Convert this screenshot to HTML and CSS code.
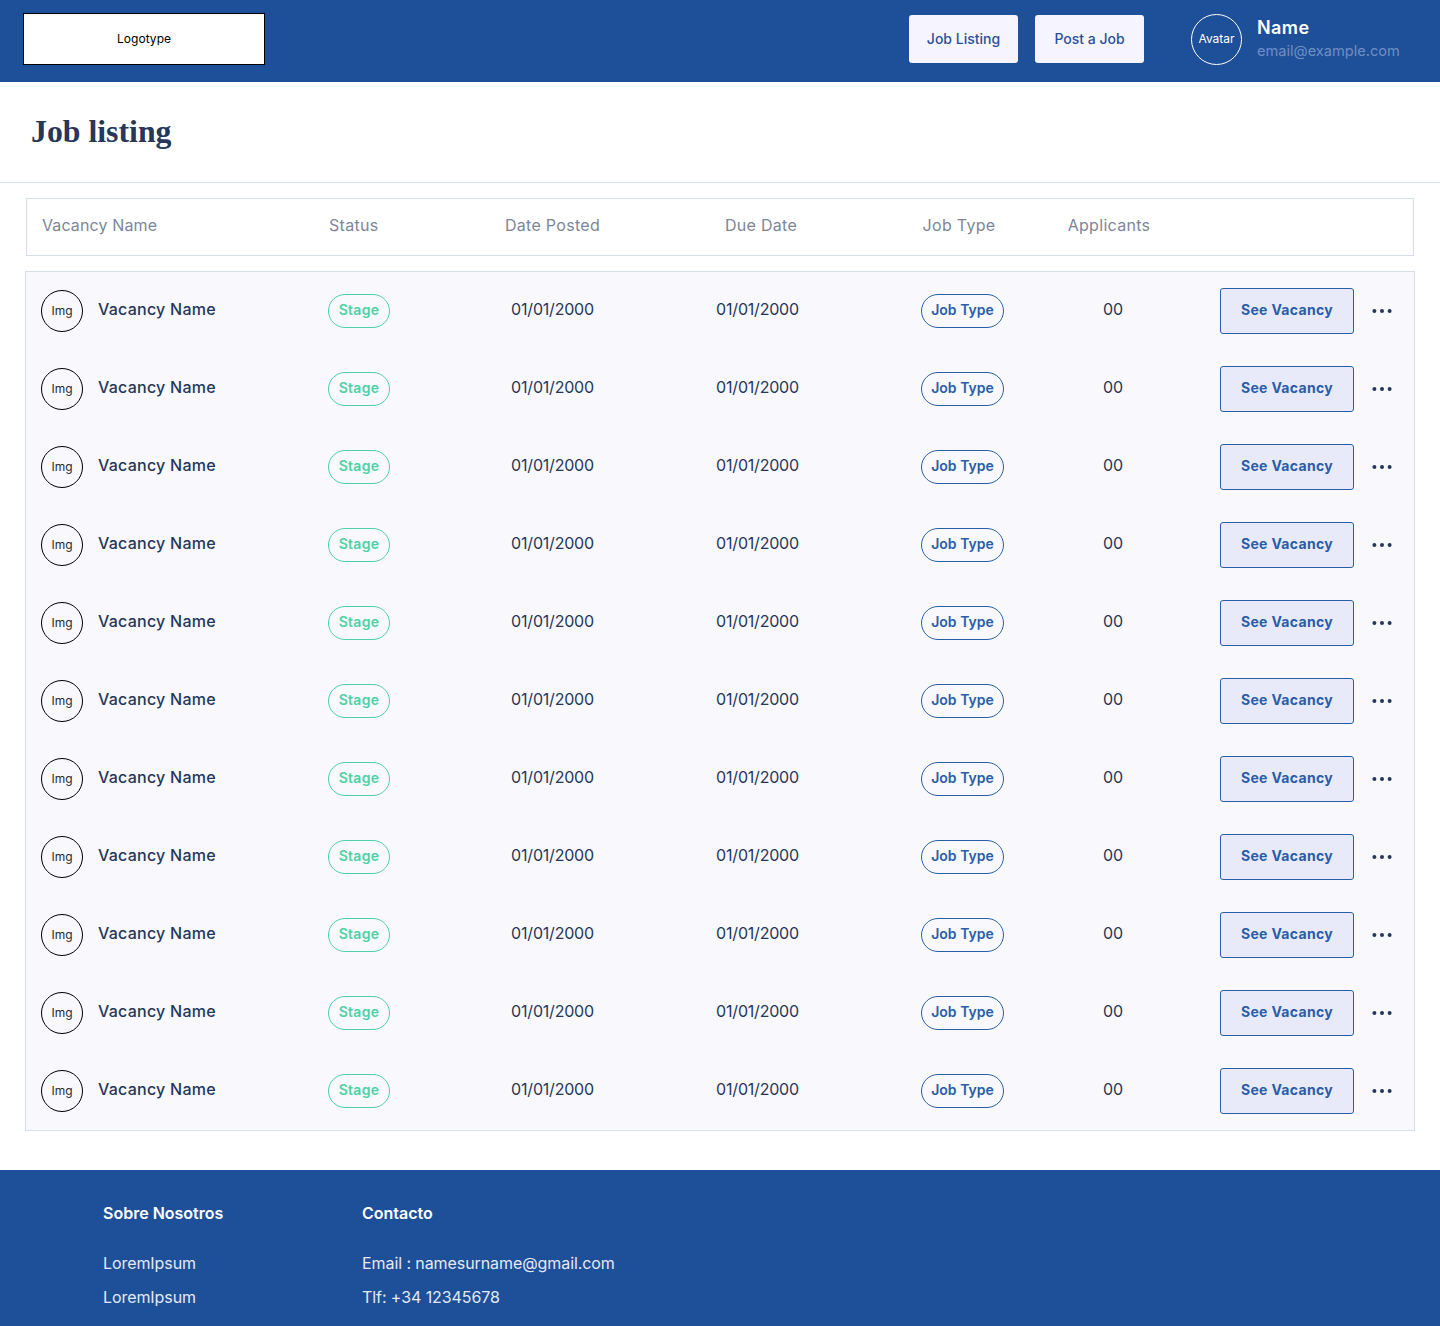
FILE: index.html
```html
<!DOCTYPE html>
<html lang="en">
<head>
    <meta charset="UTF-8">
    <meta name="viewport" content="width=device-width, initial-scale=1.0">
    <title>Job listing</title>
    <link rel="stylesheet" href="styles.css">
</head>
<body>

    <header class="topbar">
        <div class="logo">Logotype</div>
        <nav class="topnav">
            <a class="navbtn">Job Listing</a>
            <a class="navbtn">Post a Job</a>
        </nav>
        <div class="user">
            <div class="avatar">Avatar</div>
            <div class="userinfo">
                <div class="username">Name</div>
                <div class="useremail">email@example.com</div>
            </div>
        </div>
    </header>

    <div class="titlebar">
        <h1>Job listing</h1>
    </div>

    <main class="content">
        <div class="tablehead">
            <div class="headname">Vacancy Name</div>
            <div>Status</div>
            <div class="center">Date Posted</div>
            <div class="center">Due Date</div>
            <div class="center">Job Type</div>
            <div class="center">Applicants</div>
        </div>

        <div class="rows">
            <div class="row">
                <div class="vacancy"><span class="thumb">Img</span><span class="vname">Vacancy Name</span></div>
                <div><span class="stage">Stage</span></div>
                <div class="cell">01/01/2000</div>
                <div class="cell">01/01/2000</div>
                <div class="cell"><span class="jobtype">Job Type</span></div>
                <div class="cell">00</div>
                <a class="seebtn">See Vacancy</a>
                <svg class="dots" width="20" height="4" viewBox="0 0 20 4"><circle cx="2.4" cy="2" r="2"/><circle cx="10" cy="2" r="2"/><circle cx="17.6" cy="2" r="2"/></svg>
            </div>
            <div class="row">
                <div class="vacancy"><span class="thumb">Img</span><span class="vname">Vacancy Name</span></div>
                <div><span class="stage">Stage</span></div>
                <div class="cell">01/01/2000</div>
                <div class="cell">01/01/2000</div>
                <div class="cell"><span class="jobtype">Job Type</span></div>
                <div class="cell">00</div>
                <a class="seebtn">See Vacancy</a>
                <svg class="dots" width="20" height="4" viewBox="0 0 20 4"><circle cx="2.4" cy="2" r="2"/><circle cx="10" cy="2" r="2"/><circle cx="17.6" cy="2" r="2"/></svg>
            </div>
            <div class="row">
                <div class="vacancy"><span class="thumb">Img</span><span class="vname">Vacancy Name</span></div>
                <div><span class="stage">Stage</span></div>
                <div class="cell">01/01/2000</div>
                <div class="cell">01/01/2000</div>
                <div class="cell"><span class="jobtype">Job Type</span></div>
                <div class="cell">00</div>
                <a class="seebtn">See Vacancy</a>
                <svg class="dots" width="20" height="4" viewBox="0 0 20 4"><circle cx="2.4" cy="2" r="2"/><circle cx="10" cy="2" r="2"/><circle cx="17.6" cy="2" r="2"/></svg>
            </div>
            <div class="row">
                <div class="vacancy"><span class="thumb">Img</span><span class="vname">Vacancy Name</span></div>
                <div><span class="stage">Stage</span></div>
                <div class="cell">01/01/2000</div>
                <div class="cell">01/01/2000</div>
                <div class="cell"><span class="jobtype">Job Type</span></div>
                <div class="cell">00</div>
                <a class="seebtn">See Vacancy</a>
                <svg class="dots" width="20" height="4" viewBox="0 0 20 4"><circle cx="2.4" cy="2" r="2"/><circle cx="10" cy="2" r="2"/><circle cx="17.6" cy="2" r="2"/></svg>
            </div>
            <div class="row">
                <div class="vacancy"><span class="thumb">Img</span><span class="vname">Vacancy Name</span></div>
                <div><span class="stage">Stage</span></div>
                <div class="cell">01/01/2000</div>
                <div class="cell">01/01/2000</div>
                <div class="cell"><span class="jobtype">Job Type</span></div>
                <div class="cell">00</div>
                <a class="seebtn">See Vacancy</a>
                <svg class="dots" width="20" height="4" viewBox="0 0 20 4"><circle cx="2.4" cy="2" r="2"/><circle cx="10" cy="2" r="2"/><circle cx="17.6" cy="2" r="2"/></svg>
            </div>
            <div class="row">
                <div class="vacancy"><span class="thumb">Img</span><span class="vname">Vacancy Name</span></div>
                <div><span class="stage">Stage</span></div>
                <div class="cell">01/01/2000</div>
                <div class="cell">01/01/2000</div>
                <div class="cell"><span class="jobtype">Job Type</span></div>
                <div class="cell">00</div>
                <a class="seebtn">See Vacancy</a>
                <svg class="dots" width="20" height="4" viewBox="0 0 20 4"><circle cx="2.4" cy="2" r="2"/><circle cx="10" cy="2" r="2"/><circle cx="17.6" cy="2" r="2"/></svg>
            </div>
            <div class="row">
                <div class="vacancy"><span class="thumb">Img</span><span class="vname">Vacancy Name</span></div>
                <div><span class="stage">Stage</span></div>
                <div class="cell">01/01/2000</div>
                <div class="cell">01/01/2000</div>
                <div class="cell"><span class="jobtype">Job Type</span></div>
                <div class="cell">00</div>
                <a class="seebtn">See Vacancy</a>
                <svg class="dots" width="20" height="4" viewBox="0 0 20 4"><circle cx="2.4" cy="2" r="2"/><circle cx="10" cy="2" r="2"/><circle cx="17.6" cy="2" r="2"/></svg>
            </div>
            <div class="row">
                <div class="vacancy"><span class="thumb">Img</span><span class="vname">Vacancy Name</span></div>
                <div><span class="stage">Stage</span></div>
                <div class="cell">01/01/2000</div>
                <div class="cell">01/01/2000</div>
                <div class="cell"><span class="jobtype">Job Type</span></div>
                <div class="cell">00</div>
                <a class="seebtn">See Vacancy</a>
                <svg class="dots" width="20" height="4" viewBox="0 0 20 4"><circle cx="2.4" cy="2" r="2"/><circle cx="10" cy="2" r="2"/><circle cx="17.6" cy="2" r="2"/></svg>
            </div>
            <div class="row">
                <div class="vacancy"><span class="thumb">Img</span><span class="vname">Vacancy Name</span></div>
                <div><span class="stage">Stage</span></div>
                <div class="cell">01/01/2000</div>
                <div class="cell">01/01/2000</div>
                <div class="cell"><span class="jobtype">Job Type</span></div>
                <div class="cell">00</div>
                <a class="seebtn">See Vacancy</a>
                <svg class="dots" width="20" height="4" viewBox="0 0 20 4"><circle cx="2.4" cy="2" r="2"/><circle cx="10" cy="2" r="2"/><circle cx="17.6" cy="2" r="2"/></svg>
            </div>
            <div class="row">
                <div class="vacancy"><span class="thumb">Img</span><span class="vname">Vacancy Name</span></div>
                <div><span class="stage">Stage</span></div>
                <div class="cell">01/01/2000</div>
                <div class="cell">01/01/2000</div>
                <div class="cell"><span class="jobtype">Job Type</span></div>
                <div class="cell">00</div>
                <a class="seebtn">See Vacancy</a>
                <svg class="dots" width="20" height="4" viewBox="0 0 20 4"><circle cx="2.4" cy="2" r="2"/><circle cx="10" cy="2" r="2"/><circle cx="17.6" cy="2" r="2"/></svg>
            </div>
            <div class="row">
                <div class="vacancy"><span class="thumb">Img</span><span class="vname">Vacancy Name</span></div>
                <div><span class="stage">Stage</span></div>
                <div class="cell">01/01/2000</div>
                <div class="cell">01/01/2000</div>
                <div class="cell"><span class="jobtype">Job Type</span></div>
                <div class="cell">00</div>
                <a class="seebtn">See Vacancy</a>
                <svg class="dots" width="20" height="4" viewBox="0 0 20 4"><circle cx="2.4" cy="2" r="2"/><circle cx="10" cy="2" r="2"/><circle cx="17.6" cy="2" r="2"/></svg>
            </div>
        </div>
    </main>

    <footer class="footer">
        <div class="footcol first">
            <h4>Sobre Nosotros</h4>
            <p>LoremIpsum</p>
            <p>LoremIpsum</p>
        </div>
        <div class="footcol">
            <h4>Contacto</h4>
            <p>Email : namesurname@gmail.com</p>
            <p>Tlf: +34 12345678</p>
        </div>
    </footer>

</body>
</html>
```

FILE: styles.css
```css
*
{
    box-sizing: border-box;
}

body
{
    margin: 0px;
    background: #ffffff;
    font-family: Inter, "Liberation Sans", sans-serif;
    color: #25375a;
}

.topbar
{
    display: flex;
    align-items: center;
    height: 82px;
    padding-left: 23px;
    padding-bottom: 4px;
    background: #1e4f99;
}

.logo
{
    display: flex;
    align-items: center;
    justify-content: center;
    width: 242px;
    height: 52px;
    padding-bottom: 2px;
    background: #ffffff;
    border: 1px solid #000000;
    color: #000000;
    font-size: 12px;
    letter-spacing: 0.05px;
}

.topnav
{
    display: flex;
    gap: 17px;
    margin-left: 644px;
}

.navbtn
{
    display: flex;
    align-items: center;
    justify-content: center;
    width: 109px;
    height: 48px;
    padding-bottom: 2px;
    background: #f6f5ff;
    border-radius: 3px;
    color: #2a5198;
    font-size: 14px;
    font-weight: 500;
}

.user
{
    display: flex;
    align-items: center;
    gap: 15px;
    margin-left: 47px;
}

.avatar
{
    display: flex;
    align-items: center;
    justify-content: center;
    width: 51px;
    height: 51px;
    padding-bottom: 2px;
    border: 1px solid #ffffff;
    border-radius: 50%;
    color: #ffffff;
    font-size: 12px;
}

.userinfo
{
    margin-bottom: 2px;
}

.username
{
    color: #ffffff;
    font-size: 18px;
    font-weight: 600;
    line-height: 24px;
    letter-spacing: 0.4px;
}

.useremail
{
    margin-top: 1px;
    color: #6f8fc2;
    font-size: 14.6px;
    line-height: 20px;
}

.titlebar
{
    height: 101px;
    padding-left: 31px;
    border-bottom: 1px solid #d5dfec;
}

h1
{
    margin: 0px;
    padding-top: 31px;
    font-family: "Liberation Serif", serif;
    font-size: 31.8px;
    line-height: 38px;
    font-weight: 700;
    color: #25375a;
}

.content
{
    padding: 15px 25px 39px 25px;
}

.tablehead
{
    display: grid;
    grid-template-columns: 287px 120px 207px 210px 186px 114px;
    align-items: center;
    height: 58px;
    margin: 0px 1px 15px 1px;
    padding-left: 15px;
    padding-bottom: 4px;
    border: 1px solid #d5dfec;
    color: #7d8698;
    font-size: 16px;
    letter-spacing: 0.3px;
}

.headname
{
    letter-spacing: 0.12px;
}

.center
{
    text-align: center;
}

.rows
{
    display: flex;
    flex-direction: column;
    gap: 32px;
    padding: 16px 21px 16px 15px;
    background: #f8f8fd;
    border: 1px solid #d5dfec;
}

.row
{
    display: grid;
    grid-template-columns: 287px 122px 205px 205px 205px 96px 193px 38px;
    align-items: center;
    height: 46px;
}

.vacancy
{
    display: flex;
    align-items: center;
    gap: 15px;
}

.thumb
{
    display: flex;
    align-items: center;
    justify-content: center;
    width: 42px;
    height: 42px;
    padding-bottom: 2px;
    border: 1px solid #000000;
    border-radius: 50%;
    color: #1f2937;
    font-size: 12px;
}

.vname
{
    margin-top: -5px;
    font-size: 16px;
    font-weight: 450;
    letter-spacing: 0.25px;
}

.stage
{
    display: inline-block;
    height: 34px;
    width: 62px;
    border: 1px solid #4fd1a5;
    border-radius: 17px;
    color: #4fd1a5;
    font-size: 14px;
    font-weight: 600;
    line-height: 30px;
    letter-spacing: 0.3px;
    text-align: center;
    vertical-align: top;
}

.cell
{
    text-align: center;
    font-size: 16px;
    letter-spacing: -0.2px;
    color: #25375a;
    margin-top: -4px;
}

.jobtype
{
    display: inline-block;
    width: 83px;
    height: 34px;
    margin-top: 4px;
    border: 1px solid #2a5ea8;
    border-radius: 17px;
    color: #2a5ea8;
    font-size: 14px;
    font-weight: 600;
    line-height: 30px;
    letter-spacing: 0px;
    vertical-align: top;
}

.seebtn
{
    display: flex;
    align-items: center;
    justify-content: center;
    justify-self: end;
    width: 134px;
    height: 46px;
    padding-bottom: 4px;
    background: #e8eafa;
    border: 1px solid #2a5ea8;
    border-radius: 3px;
    color: #2a5ea8;
    font-size: 14px;
    font-weight: 700;
    letter-spacing: 0.32px;
}

.dots
{
    justify-self: end;
    fill: #25375a;
}

.footer
{
    display: flex;
    height: 156px;
    padding: 33px 0px 0px 103px;
    background: #1e4f99;
    color: #ffffff;
}

.footcol
{
    font-size: 16px;
}

.first
{
    width: 259px;
}

.footcol h4
{
    margin: 0px 0px 30px 0px;
    font-size: 16px;
    font-weight: 600;
    line-height: 20px;
}

.footcol p
{
    margin: 0px 0px 14px 0px;
    line-height: 20px;
    letter-spacing: -0.08px;
    color: #e4e9f5;
}
```
